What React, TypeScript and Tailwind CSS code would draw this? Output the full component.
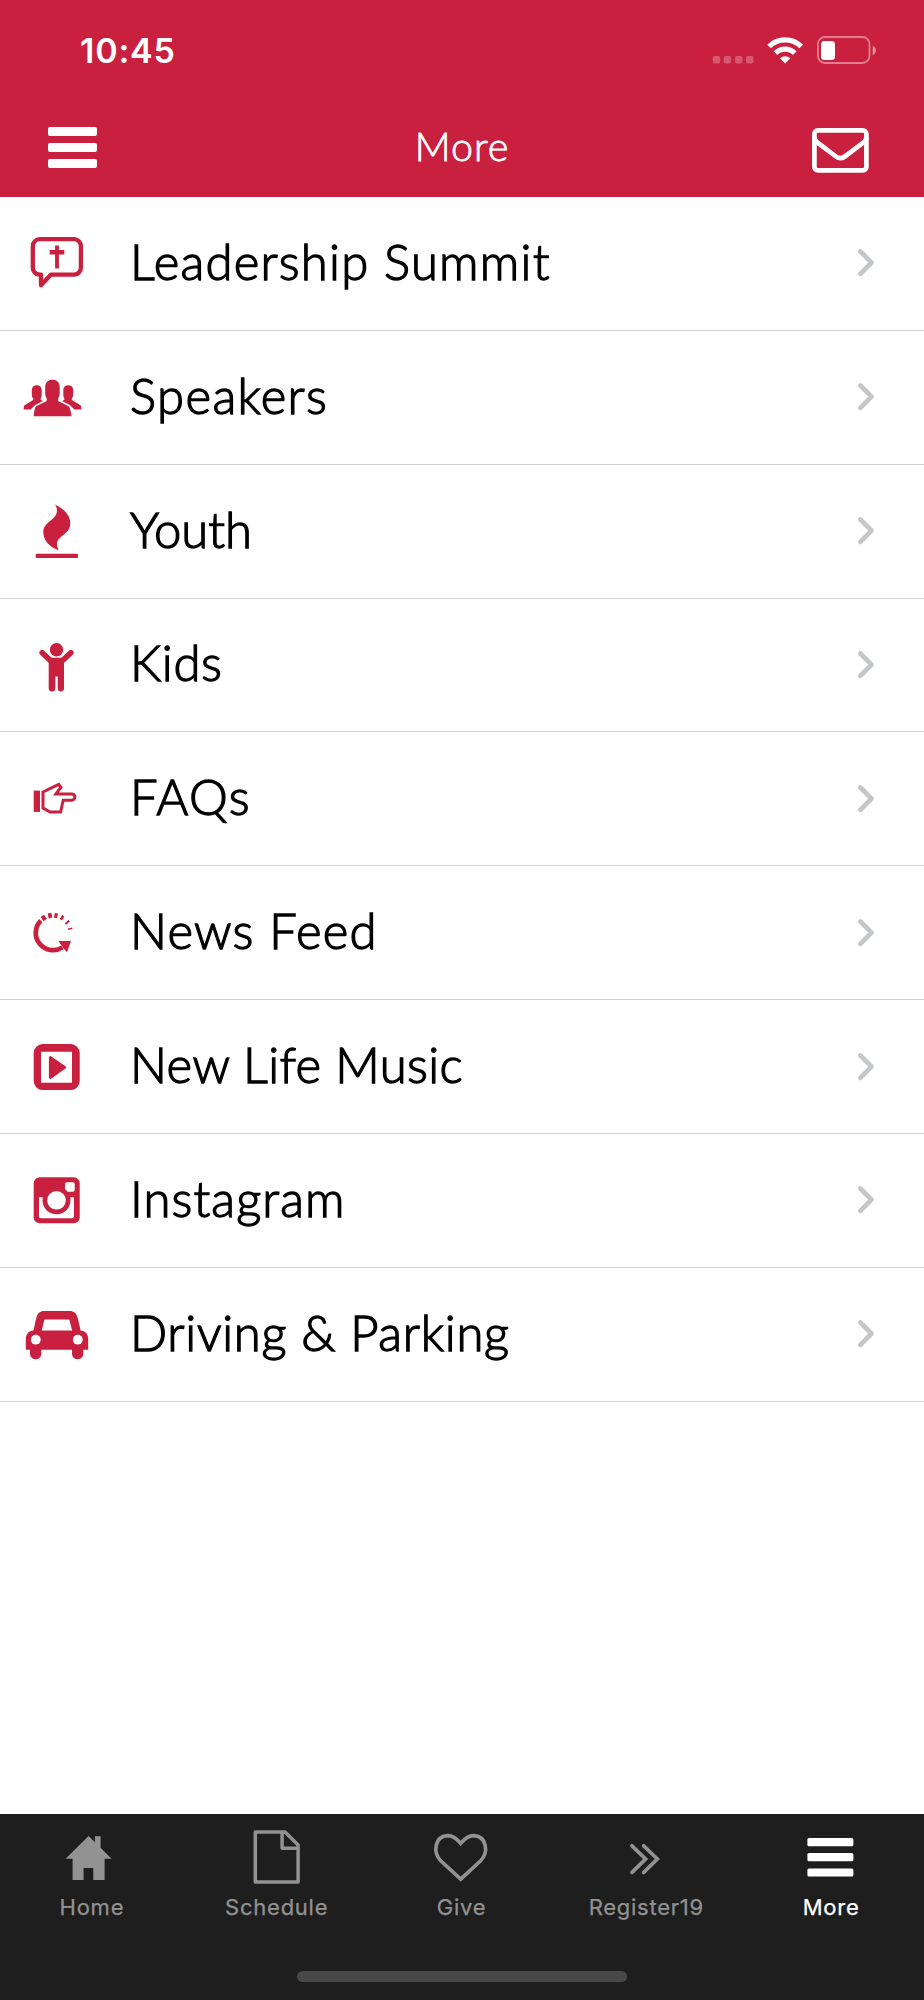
import React, {ReactNode} from "react";

interface MenuItem {
    label: string,
    labelClass: string,
    icon: ReactNode
}

interface TabItem {
    label: string,
    active?: boolean,
    icon: ReactNode
}

const menuItems: MenuItem[] = [
    {
        label: "Leadership Summit",
        labelClass: "tracking-[1.25px]",
        icon: <>
            <path
                d="M21 43.6h-1.4a6.8 6.8 0 0 1-6.8-6.8V15a6.8 6.8 0 0 1 6.8-6.8h34.5a6.8 6.8 0 0 1 6.8 6.8v21.8a6.8 6.8 0 0 1-6.8 6.8H31L21 54.2z"
                fill="none" stroke="currentColor" strokeWidth="4.3" strokeLinejoin="round"/>
            <path d="M35.1 14.4h3.8v4.6h5.4v4.4h-5.4v14h-3.8v-14h-5.4V19h5.4z"/>
        </>
    },
    {
        label: "Speakers",
        labelClass: "tracking-[1.4px]",
        icon: <>
            <path
                d="M25.2 22c0-4.5 3-7.2 7.3-7.2s7.2 2.7 7.2 7.2v6c0 2.6-.6 4-1.5 5.5V36l10 5c1.7 1 2.6 4.8 3.4 10.2H13.7c.5-5.4 1.2-9.2 2.900-10.200l10.100-5v-2.500c-.9-1.500-1.500-2.900-1.500-5.500z"/>
            <path
                d="M11.8 25c0-3.2 2-4.8 5-4.8s4.9 1.6 4.9 4.8v4c0 2-.3 3.6-1.1 4.7l.2 1.3 2.2 1-7.8 4-4.6 4.5H3.7c0-2.4.2-3.8.9-4.3l8.600-5.200v-1.500c-.9-1-1.400-2.500-1.400-4.500z"/>
            <path
                d="M53.2 25c0-3.2-2-4.8-5-4.8s-4.9 1.6-4.9 4.8v4c0 2 .3 3.6 1.1 4.7l-.2 1.3-2.2 1 7.8 4 4.6 4.5h6.9c0-2.4-.2-3.8-.9-4.3l-8.600-5.200v-1.500c.9-1 1.400-2.500 1.400-4.500z"/>
        </>
    },
    {
        label: "Youth",
        labelClass: "tracking-[0px]",
        icon: <>
            <path
                d="M35 5.4c8 4 15.3 10 15.3 19 0 11-13.3 12-13.3 20.6 0 2.6.6 4 1.7 6.4-8.5-3.4-15.4-9-15.4-18.4 0-10.5 13.7-12 13.7-21.6 0-2.400-.6-3.800-2-6z"/>
            <rect x="15.7" y="54.7" width="42.3" height="4.3" rx="1"/>
        </>
    },
    {
        label: "Kids",
        labelClass: "tracking-[0.7px]",
        icon: <>
            <circle cx="36.5" cy="16.8" r="6.7"/>
            <path d="M22.2 19.7l9 8.6M50.8 19.7l-9 8.6" stroke="currentColor" strokeWidth="5.6"
                  strokeLinecap="round"/>
            <path
                d="M28.7 27l2.5-2.2h10.6L44 27v28.3a3.150 3.150 0 0 1-6.300 0V43.500h-2.400v11.800a3.300 3.300 0 0 1-6.600 0z"/>
        </>
    },
    {
        label: "FAQs",
        labelClass: "tracking-[1.4px]",
        icon: <>
            <path d="M13.7 23.6H20v21.3h-6.3z"/>
            <path
                d="M23 25l15.7-7.6 2.3 2.8-5.1 6.7h15.9a3.150 3.150 0 0 1 0 6.300h-8.600L40.600 45H30.200L23 41.100z"
                fill="none" stroke="currentColor" strokeWidth="3"/>
        </>
    },
    {
        label: "News Feed",
        labelClass: "tracking-[1.2px]",
        icon: <>
            <path d="M20.8 19.7A17.3 17.3 0 0 0 42.5 46.4" fill="none" stroke="currentColor"
                  strokeWidth="4.7"/>
            <path d="M38.3 40H51l-4 11.3-3.3-3.8z"/>
            <g stroke="currentColor">
                <path d="M25.2 19l-2.9-4.2" strokeWidth="4"/>
                <path d="M30.5 17l-1-4.8" strokeWidth="3.7"/>
                <path d="M35.5 17l.9-4.7" strokeWidth="3.2"/>
                <path d="M40.8 18.8l2.5-4" strokeWidth="2.6"/>
                <path d="M45.4 23l3.8-3.2" strokeWidth="2"/>
                <path d="M48 28.3l4.3-1" strokeWidth="1.6"/>
            </g>
        </>
    },
    {
        label: "New Life Music",
        labelClass: "tracking-[0.4px]",
        icon: <>
            <path fillRule="evenodd"
                  d="M22.7 9.1h28a9 9 0 0 1 9 9v28a9 9 0 0 1-9 9h-28a9 9 0 0 1-9-9v-28a9 9 0 0 1 9-9zM21 16.8v31h31v-31z"/>
            <path d="M30.2 22.4v20.2l14.6-10.2z" stroke="currentColor" strokeWidth="2.6"
                  strokeLinejoin="round"/>
        </>
    },
    {
        label: "Instagram",
        labelClass: "tracking-[1.1px]",
        icon: <>
            <rect x="13.7" y="9.3" width="46" height="46" rx="6"/>
            <rect x="45" y="14.3" width="9.7" height="9.4" rx="2" fill="#fff"/>
            <path d="M19 29.3h35v19a2 2 0 0 1-2 2H21a2 2 0 0 1-2-2z" fill="#fff"/>
            <circle cx="36.5" cy="32.3" r="14"/>
            <path d="M22.8 24h27.4v5.3H22.8z"/>
            <circle cx="36.5" cy="32.3" r="9.3" fill="#fff"/>
        </>
    },
    {
        label: "Driving & Parking",
        labelClass: "tracking-[0.7px]",
        icon: <>
            <path fillRule="evenodd"
                  d="M13.4 28.4l2.8-12.2C17.4 11.2 20 9 24.5 9h25c4.500 0 7.100 2.200 8.300 7.200l2.800 12.200c4.700.5 7.600 3.600 7.600 8.400v10.900h-4.900v4a5.650 5.650 0 0 1-11.300 0v-4H21.300v4a5.650 5.650 0 0 1-11.300 0v-4H5.800V36.800c0-4.800 2.900-7.900 7.600-8.400zM24.400 17.400l-2.700 11h30.400l-2.800-11z"/>
            <circle cx="15.8" cy="37.7" r="4.9" fill="#fff"/>
            <circle cx="57.8" cy="37.7" r="4.9" fill="#fff"/>
        </>
    }
];

const tabItems: TabItem[] = [
    {
        label: "Home",
        icon: <path
            d="M28.6 11l6.3 6.2v-5.9h5.7v11.5l11 10.9h-7V55H33.3V43h-9.7v12h-11V33.7h-7z"
            fill="currentColor"/>
    },
    {
        label: "Schedule",
        icon: <path d="M10.3 7h29.8l13 13v37H10.3zM37.1 7v16.2h16" fill="none" stroke="currentColor"
                    strokeWidth="3.5" strokeLinejoin="round"/>
    },
    {
        label: "Give",
        icon: <path
            d="M30.7 54.2L11 36C2.5 27.5 4.5 11 18 10.6c5.5 0 9 3.4 12.7 7.7 3.7-4.3 7.2-7.7 12.7-7.7C56.900 11 58.900 27.500 50.400 36z"
            fill="none" stroke="currentColor" strokeWidth="3.7"/>
    },
    {
        label: "Register19",
        icon: <path d="M17 20.8L30.6 34 17 47.4M28.7 20.8L42.3 34 28.7 47.4" fill="none"
                    stroke="currentColor" strokeWidth="3.7" strokeLinecap="round"/>
    },
    {
        label: "More",
        active: true,
        icon: <g fill="currentColor">
            <rect x="7.4" y="13" width="46" height="8.2" rx="1.5"/>
            <rect x="7.4" y="28.1" width="46" height="8.2" rx="1.5"/>
            <rect x="7.4" y="43.4" width="46" height="8.2" rx="1.5"/>
        </g>
    }
];

function StatusBar() {
    return (
        <div className="flex h-[100px] items-center justify-between pl-20 pr-[48px]">
            <span className="mt-[2px] font-['Inter',sans-serif] text-[34px] font-semibold leading-none tracking-[0.8px] text-white">
                10:45
            </span>
            <svg className="h-7 w-[164px]" viewBox="712 36 164 28" fill="#fff">
                <g opacity=".25">
                    <rect x="712.7" y="56" width="7.5" height="7.5" rx="2"/>
                    <rect x="723.7" y="56" width="7.5" height="7.5" rx="2"/>
                    <rect x="735" y="56" width="7.5" height="7.5" rx="2"/>
                    <rect x="746" y="56" width="7.5" height="7.5" rx="2"/>
                </g>
                <g fill="none" stroke="#fff" strokeWidth="5.2">
                    <path d="M769.1 46.5a22.7 22.7 0 0 1 32.1 0"/>
                    <path d="M775.5 53.1a13.7 13.7 0 0 1 19.3 0"/>
                </g>
                <path d="M780 58.3a7.5 7.5 0 0 1 10.3 0L785.2 63.4z"/>
                <rect x="817.9" y="37" width="51.6" height="26" rx="7" fill="none" stroke="#fff"
                      strokeOpacity=".42" strokeWidth="1.8"/>
                <rect x="821" y="41" width="14" height="19" rx="3.5"/>
                <path d="M872.7 45.8c4.2 2 4.2 7.2 0 9.2z" opacity=".5"/>
            </svg>
        </div>
    );
}

function NavBar() {
    return (
        <div className="flex h-[96.6px] items-center justify-between pl-12 pr-[55px]">
            <div className="flex w-[57px] flex-col gap-[7px] pb-px">
                <span className="h-[9px] w-[49px] rounded-[2px] bg-white"></span>
                <span className="h-[9px] w-[49px] rounded-[2px] bg-white"></span>
                <span className="h-[9px] w-[49px] rounded-[2px] bg-white"></span>
            </div>
            <h1 className="pb-[5px] pl-[7px] font-['Lato',sans-serif] text-[39.5px] font-light leading-none tracking-[0.9px] text-white [-webkit-text-stroke:0.8px_white]">
                More
            </h1>
            <svg className="mt-1 h-[45px] w-[57px]" viewBox="0 0 57 45" fill="none" stroke="#fff"
                 strokeWidth="4.7">
                <rect x="2.4" y="2.4" width="52" height="40" rx="3.5"/>
                <path d="M2.4 9c0 2.5 1 4 3 5.5l18.5 14c3.2 2.4 5.800 2.400 9 0l18.500-14c2-1.500 3-3 3-5.500"/>
            </svg>
        </div>
    );
}

function MenuRow({label, labelClass, icon}: MenuItem) {
    return (
        <li className="flex h-[133.87px] items-center border-b border-[#d1d1d3] pl-5 pr-[48px]">
            <svg className="h-16 w-[72px] shrink-0 text-[#c8203e]" viewBox="0 0 72 64" fill="currentColor">
                {icon}
            </svg>
            <span className="ml-[38px] flex-1 whitespace-nowrap pb-[4px] font-['Lato',sans-serif] text-[49px] font-light leading-none text-black [-webkit-text-stroke:1.3px_black]">
                <span className={labelClass}>{label}</span>
            </span>
            <svg className="h-7 w-[18px] shrink-0" viewBox="0 0 18 28" fill="none" stroke="#c5c6c8"
                 strokeWidth="4.7" strokeLinecap="round" strokeLinejoin="round">
                <path d="M2.4 2.5L13.5 13.7 2.4 24.9"/>
            </svg>
        </li>
    );
}

function App() {
    return (
        <div className="flex h-[2000px] w-[924px] flex-col overflow-hidden bg-white">
            <header className="bg-[#c8203e]">
                <StatusBar/>
                <NavBar/>
            </header>

            <ul className="flex-1 pt-[0.4px]">
                {menuItems.map((item) => <MenuRow key={item.label} {...item}/>)}
            </ul>

            <footer className="flex h-[185.7px] flex-col items-center justify-between bg-[#1e1e1e] pb-[18px] pt-[10.7px]">
                <nav className="grid w-full grid-cols-5">
                    {tabItems.map((tab) => (
                        <div key={tab.label}
                             className={tab.active ? "flex flex-col items-center text-white" : "flex flex-col items-center text-[#929292]"}>
                            <svg className="size-16" viewBox="0 0 64 64">{tab.icon}</svg>
                            <span className="mt-[7px] pr-px font-['Inter',sans-serif] text-[22px] font-normal leading-none tracking-[0.75px] [-webkit-text-stroke:0.25px_currentColor]">
                                {tab.label}
                            </span>
                        </div>
                    ))}
                </nav>
                <div className="h-[11px] w-[330px] rounded-full bg-[#484848]"></div>
            </footer>
        </div>
    );
}

export default App;
